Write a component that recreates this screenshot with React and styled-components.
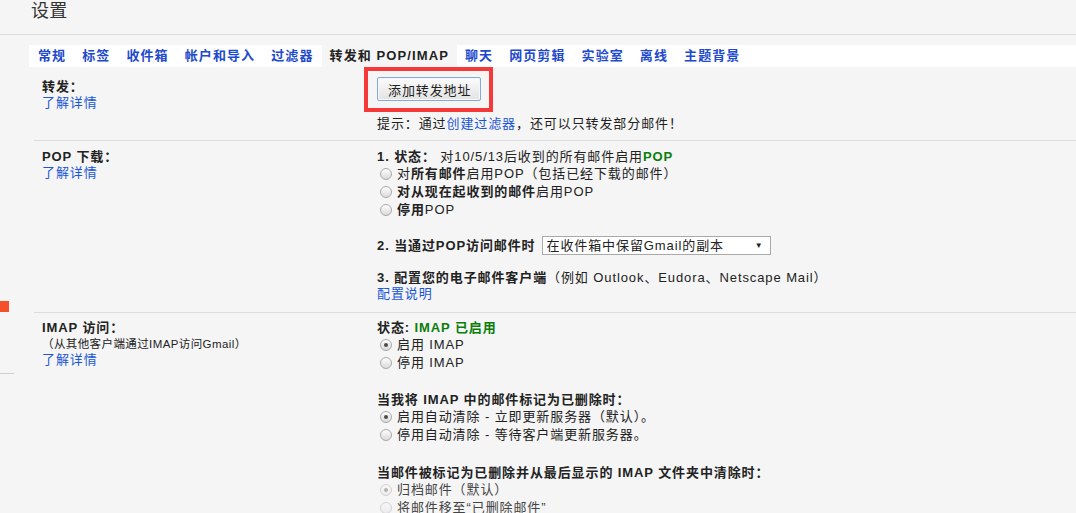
import React from "react";
import styled, { createGlobalStyle, css } from "styled-components";

const Global = createGlobalStyle`
  html, body { margin: 0; padding: 0; background: #f5f5f5; overflow: hidden; }
  body {
    font-family: "Liberation Sans", Arial, "Noto Sans CJK SC", sans-serif;
    font-size: 13px;
    letter-spacing: 0.9px;
    color: #222;
  }
`;

const Page = styled.div`
  width: 100%;
  height: 513px;
  overflow: hidden;
  background: #f5f5f5;
`;

const Header = styled.header`
  box-sizing: border-box;
  height: 35px;
  border-bottom: 1px solid #dcdcdc;
  padding-left: 31px;
`;

const Title = styled.h1`
  margin: 0;
  font-size: 18px;
  font-weight: normal;
  line-height: 22px;
  letter-spacing: 0.3px;
  color: #333;
`;

const Body = styled.div`
  display: grid;
  grid-template-columns: 29px 1fr;
`;

const LeftRail = styled.aside`
  padding-top: 266px;
`;

const RedMark = styled.div`
  width: 9px;
  height: 11px;
  background: #f4502c;
`;

const RailLine = styled.div`
  margin-top: 61px;
  width: 14px;
  height: 1px;
  background: #cfcfcf;
`;

const Main = styled.main`
  padding-top: 10px;
`;

const TabBar = styled.nav`
  display: flex;
  height: 22px;
  background: #fff;
  padding-left: 1px;
`;

const Tab = styled.a`
  padding: 0 8px;
  height: 22px;
  line-height: 22px;
  font-weight: bold;
  font-size: 13px;
  letter-spacing: 1.1px;
  white-space: nowrap;
  cursor: pointer;
  color: ${(p) => (p.$active ? "#222" : "#2149cc")};
  background: ${(p) => (p.$active ? "#f5f5f5" : "transparent")};
`;

const Section = styled.section`
  margin-left: 5px;
  display: grid;
  grid-template-columns: 335px 1fr;
  padding: ${(p) => p.$pad};
  padding-left: 8px;
  ${(p) =>
    p.$divider &&
    css`
      border-top: 1px solid #dcdcdc;
    `}
`;

const LabelCol = styled.div`
  line-height: 16px;
  padding-top: ${(p) => p.$offset || 0}px;
`;

const LabelTitle = styled.div`
  font-weight: bold;
`;

const LabelNote = styled.div`
  font-size: 11.5px;
  letter-spacing: 0.4px;
  color: #222;
`;

const Link = styled.a`
  color: #1a56d6;
  cursor: pointer;
`;

const ValueCol = styled.div`
  line-height: 16px;
`;

const ButtonWrap = styled.div`
  position: relative;
  display: inline-block;
`;

const Highlight = styled.div`
  position: absolute;
  top: -10px;
  bottom: -11px;
  left: -13px;
  right: -12px;
  border: 4px solid #f53838;
  pointer-events: none;
`;

const Button = styled.button`
  height: 24px;
  padding: 0 9px 0 10px;
  font-family: inherit;
  font-size: 13px;
  letter-spacing: 0.9px;
  color: #222;
  border: 1px solid #86a9d6;
  border-radius: 2px;
  background: linear-gradient(#fbfbfb, #e3e3e3);
  box-shadow: inset 0 0 0 1px #f4f8fd;
  display: block;
`;

const Hint = styled.div`
  margin-top: 15px;
`;

const Line = styled.div`
  line-height: 16px;
  margin-top: ${(p) => p.$mt || 0}px;
  white-space: nowrap;
`;

const B = styled.b`
  font-weight: bold;
`;

const Green = styled.b`
  font-weight: bold;
  color: #0a7d0a;
`;

const RadioRow = styled.label`
  display: flex;
  align-items: center;
  height: 18px;
  white-space: nowrap;
`;

const RadioDot = styled.span`
  position: relative;
  flex: none;
  width: 12px;
  height: 12px;
  box-sizing: border-box;
  border-radius: 50%;
  margin: 0 5px 0 3px;
  border: 1px solid ${(p) => (p.$disabled ? "#d2d2d2" : "#a9a9a9")};
  background: ${(p) =>
    p.$disabled
      ? "linear-gradient(#f7f7f7, #ececec)"
      : "linear-gradient(#fefefe, #dadada)"};
  ${(p) =>
    p.$checked &&
    css`
      &::after {
        content: "";
        position: absolute;
        left: 3px;
        top: 3px;
        width: 4px;
        height: 4px;
        border-radius: 50%;
        background: ${p.$disabled ? "#b4b4b4" : "#4a4a4a"};
      }
    `}
`;

const RadioText = styled.span`
  color: ${(p) => (p.$disabled ? "#444" : "#222")};
`;

const SelectRow = styled.div`
  display: flex;
  align-items: center;
  margin-top: 17px;
  height: 19px;
  white-space: nowrap;
`;

const SelectBox = styled.div`
  margin-left: 6px;
  width: 229px;
  height: 19px;
  box-sizing: border-box;
  border: 1px solid #a9a9a9;
  background: #fff;
  display: flex;
  align-items: center;
  justify-content: space-between;
  padding: 0 6px 0 4px;
  font-size: 13px;
`;

const Arrow = styled.span`
  font-size: 8px;
  color: #222;
`;

function Radio({ checked, disabled, children }) {
  return (
    <RadioRow>
      <RadioDot $checked={checked} $disabled={disabled} />
      <RadioText $disabled={disabled}>{children}</RadioText>
    </RadioRow>
  );
}

const tabs = [
  "常规",
  "标签",
  "收件箱",
  "帐户和导入",
  "过滤器",
  "转发和 POP/IMAP",
  "聊天",
  "网页剪辑",
  "实验室",
  "离线",
  "主题背景",
];

export default function App() {
  return (
    <Page>
      <Global />
      <Header>
        <Title>设置</Title>
      </Header>
      <Body>
        <LeftRail>
          <RedMark />
          <RailLine />
        </LeftRail>
        <Main>
          <TabBar>
            {tabs.map((t) => (
              <Tab key={t} $active={t === "转发和 POP/IMAP"}>
                {t}
              </Tab>
            ))}
          </TabBar>

          <Section $pad="10px 0 8px 8px">
            <LabelCol $offset={2}>
              <LabelTitle>转发：</LabelTitle>
              <Link>了解详情</Link>
            </LabelCol>
            <ValueCol>
              <ButtonWrap>
                <Button>添加转发地址</Button>
                <Highlight />
              </ButtonWrap>
              <Hint>
                提示：通过<Link>创建过滤器</Link>，还可以只转发部分邮件！
              </Hint>
            </ValueCol>
          </Section>

          <Section $divider $pad="8px 0 10px 8px">
            <LabelCol>
              <LabelTitle>POP 下载：</LabelTitle>
              <Link>了解详情</Link>
            </LabelCol>
            <ValueCol>
              <Line>
                <B>1. 状态：</B> 对10/5/13后收到的所有邮件启用<Green>POP</Green>
              </Line>
              <Radio>
                对<B>所有邮件</B>启用POP（包括已经下载的邮件）
              </Radio>
              <Radio>
                <B>对从现在起收到的邮件</B>启用POP
              </Radio>
              <Radio>
                <B>停用</B>POP
              </Radio>
              <SelectRow>
                <B>2. 当通过POP访问邮件时</B>
                <SelectBox>
                  <span>在收件箱中保留Gmail的副本</span>
                  <Arrow>▼</Arrow>
                </SelectBox>
              </SelectRow>
              <Line $mt={15}>
                <B>3. 配置您的电子邮件客户端</B>（例如 Outlook、Eudora、Netscape Mail）
              </Line>
              <Line>
                <Link>配置说明</Link>
              </Line>
            </ValueCol>
          </Section>

          <Section $divider $pad="7px 0 0 8px">
            <LabelCol>
              <LabelTitle>IMAP 访问：</LabelTitle>
              <LabelNote>（从其他客户端通过IMAP访问Gmail）</LabelNote>
              <Link>了解详情</Link>
            </LabelCol>
            <ValueCol>
              <Line>
                <B>状态: </B>
                <Green>IMAP 已启用</Green>
              </Line>
              <Radio checked>启用 IMAP</Radio>
              <Radio>停用 IMAP</Radio>
              <Line $mt={20}>
                <B>当我将 IMAP 中的邮件标记为已删除时：</B>
              </Line>
              <Radio checked>启用自动清除 - 立即更新服务器（默认）。</Radio>
              <Radio>停用自动清除 - 等待客户端更新服务器。</Radio>
              <Line $mt={21}>
                <B>当邮件被标记为已删除并从最后显示的 IMAP 文件夹中清除时：</B>
              </Line>
              <Radio checked disabled>
                归档邮件（默认）
              </Radio>
              <Radio disabled>将邮件移至“已删除邮件”</Radio>
            </ValueCol>
          </Section>
        </Main>
      </Body>
    </Page>
  );
}
